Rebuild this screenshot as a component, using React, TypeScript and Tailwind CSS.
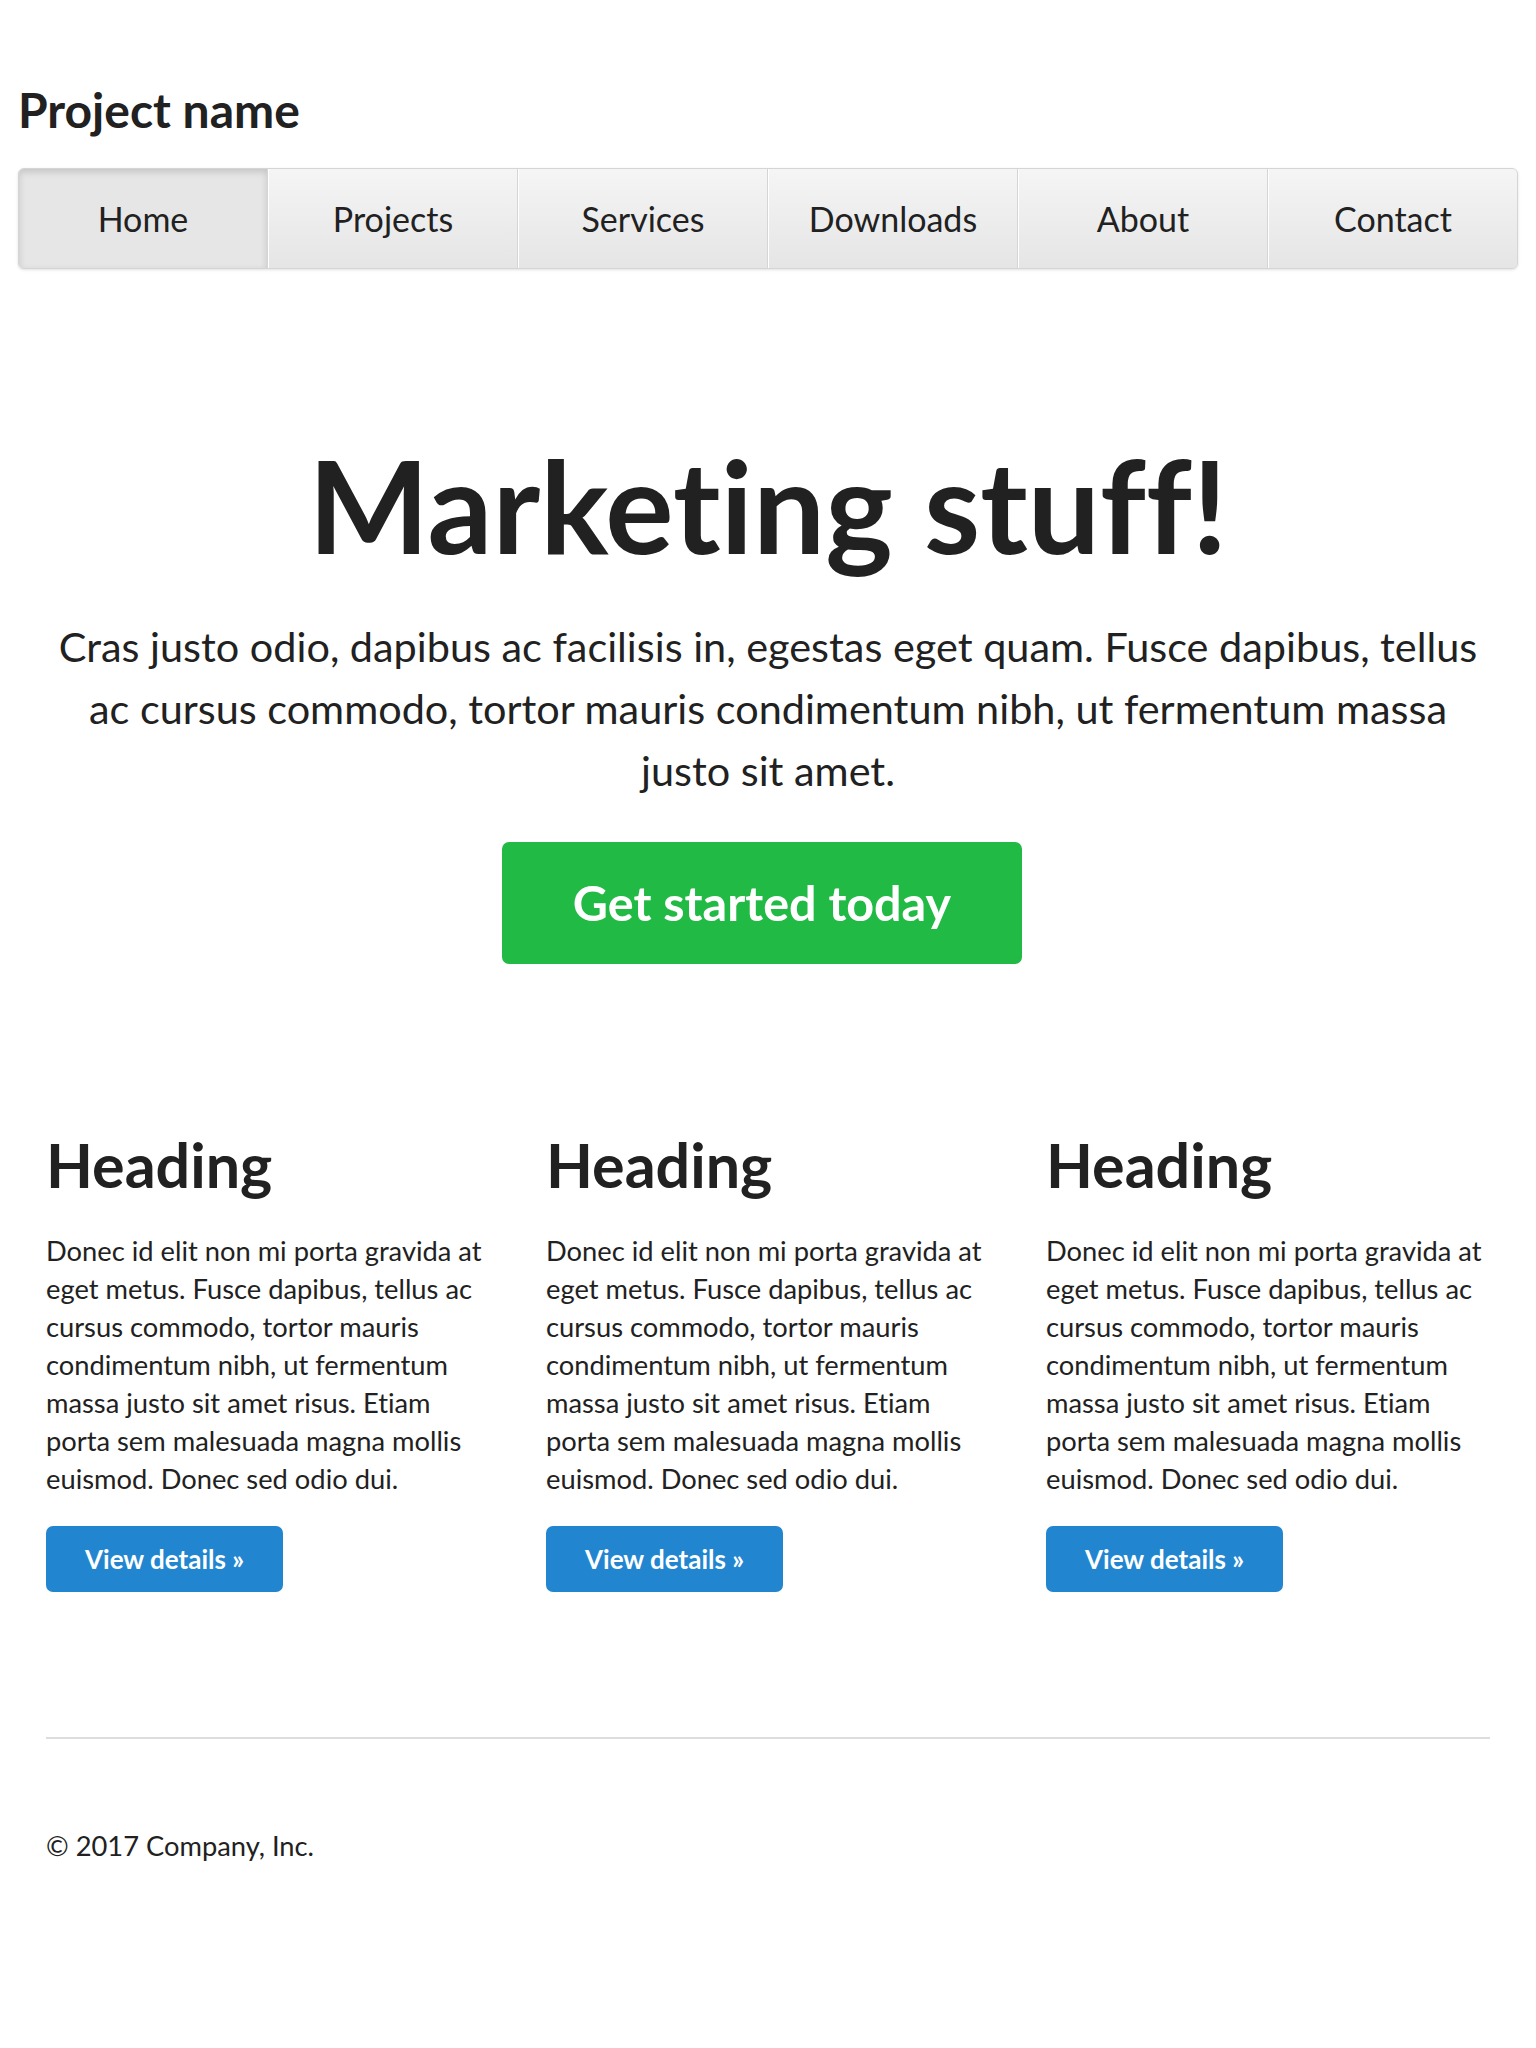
const navItems = ["Home", "Projects", "Services", "Downloads", "About", "Contact"];

const blurb =
  "Donec id elit non mi porta gravida at eget metus. Fusce dapibus, tellus ac cursus commodo, tortor mauris condimentum nibh, ut fermentum massa justo sit amet risus. Etiam porta sem malesuada magna mollis euismod. Donec sed odio dui.";

function Nav() {
  return (
    <nav className="mt-[28px] flex overflow-hidden rounded-[6px] border border-[#d5d5d5] bg-[#eee] shadow-[0_1px_3px_rgba(0,0,0,0.12)]">
      {navItems.map((item, i) => {
        const active = i === 0;
        return (
          <a
            key={item}
            href="#"
            className={
              active
                ? "flex h-[99px] flex-1 items-center justify-center border-r border-[#d5d5d5] bg-[#e6e6e6] text-[34px] leading-[99px] text-[#212121] shadow-[inset_0_3px_7px_rgba(0,0,0,0.15)]"
                : i === navItems.length - 1
                  ? "flex h-[99px] flex-1 items-center justify-center border-l border-white bg-linear-to-b from-[#f5f5f5] to-[#e5e5e5] text-[34px] leading-[99px] text-[#212121]"
                  : "flex h-[99px] flex-1 items-center justify-center border-r border-l border-r-[#d5d5d5] border-l-white bg-linear-to-b from-[#f5f5f5] to-[#e5e5e5] text-[34px] leading-[99px] text-[#212121]"
            }
          >
            {item}
          </a>
        );
      })}
    </nav>
  );
}

function Feature() {
  return (
    <div className="px-[28px]">
      <h2 className="text-[61px] font-bold leading-[1.2]">Heading</h2>
      <p className="mt-[31px] text-[27.3px] leading-[38px]">{blurb}</p>
      <a
        href="#"
        className="mt-[28px] inline-flex h-[66px] items-center rounded-[7px] bg-[#2185d0] px-[39px] text-[26px] font-bold leading-none text-white"
      >
        View details »
      </a>
    </div>
  );
}

export default function App() {
  return (
    <div className="min-h-[2048px] bg-white font-['Lato',sans-serif] text-[#212121] [font-variant-ligatures:none]">
      <div className="px-[18px] pt-[80px]">
        <h3 className="text-[48px] font-bold leading-[60px]">Project name</h3>
        <Nav />

        <section className="mt-[159px] px-[28px] text-center">
          <h1 className="text-[128px] font-bold leading-[1.2]">Marketing stuff!</h1>
          <p className="mt-[33px] text-[41.4px] leading-[62px]">
            Cras justo odio, dapibus ac facilisis in, egestas eget quam. Fusce dapibus, tellus ac cursus
            commodo, tortor mauris condimentum nibh, ut fermentum massa justo sit amet.
          </p>
          <a
            href="#"
            className="mt-[41px] mr-[12px] inline-flex h-[122px] items-center rounded-[7px] bg-[#21ba45] px-[71px] text-[48.5px] font-bold leading-none text-white"
          >
            Get started today
          </a>
        </section>

        <div className="mt-[164px] grid grid-cols-3">
          <Feature />
          <Feature />
          <Feature />
        </div>

        <footer className="mx-[28px] mt-[145px] border-t-2 border-[#dddddd] pt-[91px]">
          <p className="text-[27.3px] leading-[1.2]">© 2017 Company, Inc.</p>
        </footer>
      </div>
    </div>
  );
}
